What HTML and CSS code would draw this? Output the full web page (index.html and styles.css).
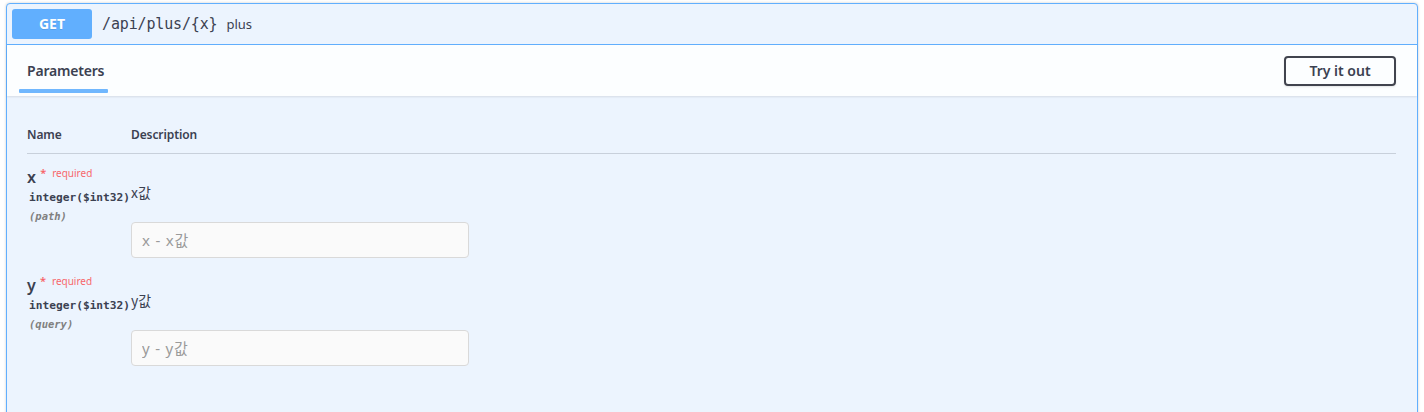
FILE: index.html
```html
<!DOCTYPE html>
<html lang="ko">
<head>
<meta charset="utf-8">
<link rel="stylesheet" href="styles.css">
</head>
<body>
<div class="opblock">
  <div class="summary">
    <span class="method">GET</span>
    <span class="path">/api/plus/{x}</span>
    <span class="desc">plus</span>
  </div>
  <div class="tabs">
    <div class="tab">Parameters</div>
    <button class="try">Try it out</button>
  </div>
  <div class="params">
    <div class="thead">
      <div class="col-name">Name</div>
      <div class="col-desc">Description</div>
    </div>
    <div class="row">
      <div class="col-name">
        <div class="pname">x <span class="req">*<span class="req-text">required</span></span></div>
        <div class="ptype">integer<span>($int32)</span></div>
        <div class="pin">(path)</div>
      </div>
      <div class="col-desc">
        <div class="pdesc">x값</div>
        <input class="pinput" type="text" placeholder="x - x값">
      </div>
    </div>
    <div class="row">
      <div class="col-name">
        <div class="pname">y <span class="req">*<span class="req-text">required</span></span></div>
        <div class="ptype">integer<span>($int32)</span></div>
        <div class="pin">(query)</div>
      </div>
      <div class="col-desc">
        <div class="pdesc">y값</div>
        <input class="pinput" type="text" placeholder="y - y값">
      </div>
    </div>
  </div>
</div>
</body>
</html>
```

FILE: styles.css
```css
* { box-sizing: border-box; }
html, body { margin: 0; padding: 0; background: #fff; }
body {
  font-family: "Noto Sans", "Noto Sans CJK KR", sans-serif;
  color: #3b4151;
  padding: 3px 6px 0 6px;
  width: 1424px;
  overflow: hidden;
}
.opblock {
  width: 1412px;
  height: 420px;
  border: 1px solid #61affe;
  border-radius: 4px;
  background: #ecf4fe;
  box-shadow: 0 0 3px rgba(0,0,0,.19);
}
.summary {
  display: flex;
  align-items: center;
  height: 41px;
  padding: 0 5px;
  border-bottom: 1px solid #61affe;
}
.method {
  width: 80px;
  height: 30px;
  border-radius: 3px;
  background: #61affe;
  color: #fff;
  font-family: "Noto Sans", sans-serif;
  font-weight: 700;
  font-size: 14px;
  line-height: 30px;
  text-align: center;
  text-shadow: 0 1px 0 rgba(0,0,0,.1);
}
.path {
  margin-left: 10px;
  font-family: "DejaVu Sans Mono", monospace;
  font-size: 15px;
  color: #3b4151;
  letter-spacing: -0.15px;
}
.desc {
  margin-left: 9px;
  font-size: 13px;
  color: #3b4151;
}
.tabs {
  display: flex;
  align-items: center;
  justify-content: space-between;
  height: 51px;
  padding: 0 21px 0 12px;
  background: rgba(255,255,255,.85);
  box-shadow: 0 1px 2px rgba(0,0,0,.1);
}
.tab {
  position: relative;
  align-self: stretch;
  display: flex;
  align-items: center;
  padding: 0 8px;
  width: 89px;
  font-size: 14px;
  font-weight: 600;
  letter-spacing: -0.2px;
}
.tab::after {
  content: "";
  position: absolute;
  left: 0;
  right: 0;
  bottom: 3px;
  height: 4px;
  background: #61affe;
  border-radius: 1px;
  opacity: .9;
}
.try {
  width: 112px;
  height: 30px;
  border: 2px solid #41444e;
  border-radius: 4px;
  background: transparent;
  font-family: "Noto Sans", sans-serif;
  font-size: 14px;
  font-weight: 600;
  color: #3b4151;
  box-shadow: 0 1px 2px rgba(0,0,0,.1);
}
.params {
  padding: 0 21px 0 20px;
}
.thead {
  display: flex;
  height: 58px;
  padding-top: 30px;
  border-bottom: 1px solid rgba(59,65,81,.2);
  font-size: 12px;
  font-weight: 600;
  letter-spacing: -0.1px;
}
.col-name { width: 104px; flex: none; }
.col-desc { flex: 1; }
.row {
  display: flex;
  padding-top: 13px;
  height: 108px;
}
.pname {
  font-size: 16px;
  font-weight: 600;
  line-height: 20px;
  font-family: "Noto Sans", sans-serif;
}
.req {
  position: relative;
  top: -6px;
  font-size: 11px;
  color: #ff0000;
  opacity: .6;
  margin-left: 0;
}
.req-text {
  margin-left: 6px;
  font-size: 10px;
  font-weight: 400;
}
.ptype {
  padding-left: 2px;
  font-family: "DejaVu Sans Mono", monospace;
  font-size: 11.2px;
  font-weight: 700;
  line-height: 18px;
}
.pin {
  padding-left: 2px;
  font-family: "DejaVu Sans Mono", monospace;
  font-size: 10.5px;
  font-style: italic;
  font-weight: 600;
  color: gray;
  line-height: 18px;
}
.pdesc {
  margin-top: 17px;
  font-size: 14px;
  line-height: 16px;
  font-family: "Noto Sans CJK KR", sans-serif;
  color: #3b4151;
}
.pinput {
  display: block;
  margin-top: 22px;
  width: 338px;
  height: 36px;
  padding: 0 10px;
  border: 1px solid #d9d9d9;
  border-radius: 4px;
  background: #fafafa;
  font-family: "Noto Sans", "Noto Sans CJK KR", sans-serif;
  font-size: 15px;
  letter-spacing: 0.8px;
  color: #3b4151;
}
.pinput::placeholder { color: #9a9a9a; }
```
